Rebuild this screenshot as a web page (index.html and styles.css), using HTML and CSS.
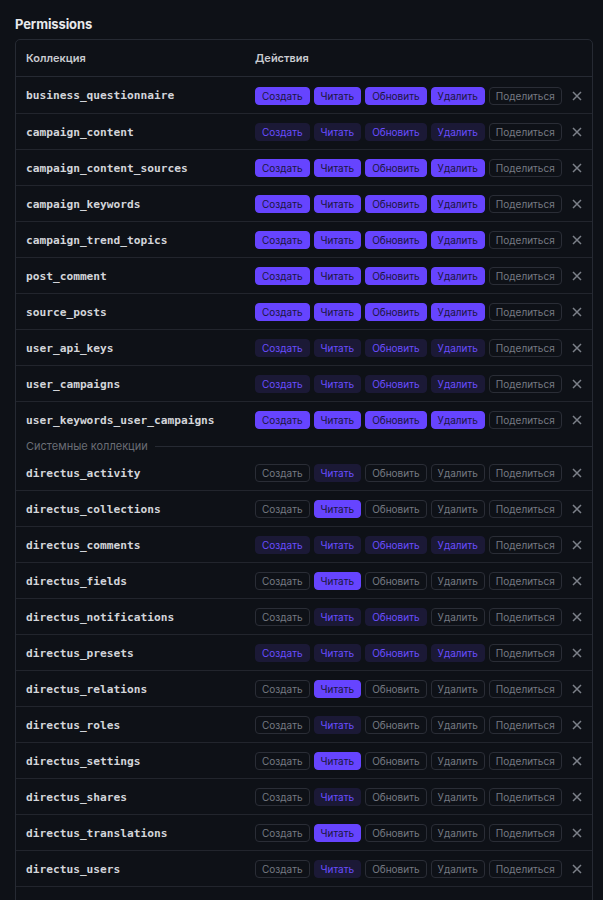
FILE: index.html
```html
<!DOCTYPE html>
<html lang="ru">
<head>
<meta charset="utf-8">
<title>Permissions</title>
<link rel="stylesheet" href="styles.css">
</head>
<body>
<h2 class="title">Permissions</h2>
<div class="table">
  <div class="head">
    <div class="col-name">Коллекция</div>
    <div class="col-act">Действия</div>
  </div>

  <div class="row first"><div class="name">business_questionnaire</div><div class="acts"><span class="b full">Создать</span><span class="b full">Читать</span><span class="b full">Обновить</span><span class="b full">Удалить</span><span class="b">Поделиться</span><svg class="x" viewBox="0 0 10 10"><path d="M1 1L9 9M9 1L1 9"/></svg></div></div>
  <div class="row"><div class="name">campaign_content</div><div class="acts"><span class="b part">Создать</span><span class="b part">Читать</span><span class="b part">Обновить</span><span class="b part">Удалить</span><span class="b">Поделиться</span><svg class="x" viewBox="0 0 10 10"><path d="M1 1L9 9M9 1L1 9"/></svg></div></div>
  <div class="row"><div class="name">campaign_content_sources</div><div class="acts"><span class="b full">Создать</span><span class="b full">Читать</span><span class="b full">Обновить</span><span class="b full">Удалить</span><span class="b">Поделиться</span><svg class="x" viewBox="0 0 10 10"><path d="M1 1L9 9M9 1L1 9"/></svg></div></div>
  <div class="row"><div class="name">campaign_keywords</div><div class="acts"><span class="b full">Создать</span><span class="b full">Читать</span><span class="b full">Обновить</span><span class="b full">Удалить</span><span class="b">Поделиться</span><svg class="x" viewBox="0 0 10 10"><path d="M1 1L9 9M9 1L1 9"/></svg></div></div>
  <div class="row"><div class="name">campaign_trend_topics</div><div class="acts"><span class="b full">Создать</span><span class="b full">Читать</span><span class="b full">Обновить</span><span class="b full">Удалить</span><span class="b">Поделиться</span><svg class="x" viewBox="0 0 10 10"><path d="M1 1L9 9M9 1L1 9"/></svg></div></div>
  <div class="row"><div class="name">post_comment</div><div class="acts"><span class="b full">Создать</span><span class="b full">Читать</span><span class="b full">Обновить</span><span class="b full">Удалить</span><span class="b">Поделиться</span><svg class="x" viewBox="0 0 10 10"><path d="M1 1L9 9M9 1L1 9"/></svg></div></div>
  <div class="row"><div class="name">source_posts</div><div class="acts"><span class="b full">Создать</span><span class="b full">Читать</span><span class="b full">Обновить</span><span class="b full">Удалить</span><span class="b">Поделиться</span><svg class="x" viewBox="0 0 10 10"><path d="M1 1L9 9M9 1L1 9"/></svg></div></div>
  <div class="row"><div class="name">user_api_keys</div><div class="acts"><span class="b part">Создать</span><span class="b part">Читать</span><span class="b part">Обновить</span><span class="b part">Удалить</span><span class="b">Поделиться</span><svg class="x" viewBox="0 0 10 10"><path d="M1 1L9 9M9 1L1 9"/></svg></div></div>
  <div class="row"><div class="name">user_campaigns</div><div class="acts"><span class="b part">Создать</span><span class="b part">Читать</span><span class="b part">Обновить</span><span class="b part">Удалить</span><span class="b">Поделиться</span><svg class="x" viewBox="0 0 10 10"><path d="M1 1L9 9M9 1L1 9"/></svg></div></div>
  <div class="row last"><div class="name">user_keywords_user_campaigns</div><div class="acts"><span class="b full">Создать</span><span class="b full">Читать</span><span class="b full">Обновить</span><span class="b full">Удалить</span><span class="b">Поделиться</span><svg class="x" viewBox="0 0 10 10"><path d="M1 1L9 9M9 1L1 9"/></svg></div></div>

  <div class="divider"><span>Системные коллекции</span><i></i></div>

  <div class="row"><div class="name">directus_activity</div><div class="acts"><span class="b">Создать</span><span class="b part">Читать</span><span class="b">Обновить</span><span class="b">Удалить</span><span class="b">Поделиться</span><svg class="x" viewBox="0 0 10 10"><path d="M1 1L9 9M9 1L1 9"/></svg></div></div>
  <div class="row"><div class="name">directus_collections</div><div class="acts"><span class="b">Создать</span><span class="b full">Читать</span><span class="b">Обновить</span><span class="b">Удалить</span><span class="b">Поделиться</span><svg class="x" viewBox="0 0 10 10"><path d="M1 1L9 9M9 1L1 9"/></svg></div></div>
  <div class="row"><div class="name">directus_comments</div><div class="acts"><span class="b part">Создать</span><span class="b part">Читать</span><span class="b part">Обновить</span><span class="b part">Удалить</span><span class="b">Поделиться</span><svg class="x" viewBox="0 0 10 10"><path d="M1 1L9 9M9 1L1 9"/></svg></div></div>
  <div class="row"><div class="name">directus_fields</div><div class="acts"><span class="b">Создать</span><span class="b full">Читать</span><span class="b">Обновить</span><span class="b">Удалить</span><span class="b">Поделиться</span><svg class="x" viewBox="0 0 10 10"><path d="M1 1L9 9M9 1L1 9"/></svg></div></div>
  <div class="row"><div class="name">directus_notifications</div><div class="acts"><span class="b">Создать</span><span class="b part">Читать</span><span class="b part">Обновить</span><span class="b">Удалить</span><span class="b">Поделиться</span><svg class="x" viewBox="0 0 10 10"><path d="M1 1L9 9M9 1L1 9"/></svg></div></div>
  <div class="row"><div class="name">directus_presets</div><div class="acts"><span class="b part">Создать</span><span class="b part">Читать</span><span class="b part">Обновить</span><span class="b part">Удалить</span><span class="b">Поделиться</span><svg class="x" viewBox="0 0 10 10"><path d="M1 1L9 9M9 1L1 9"/></svg></div></div>
  <div class="row"><div class="name">directus_relations</div><div class="acts"><span class="b">Создать</span><span class="b full">Читать</span><span class="b">Обновить</span><span class="b">Удалить</span><span class="b">Поделиться</span><svg class="x" viewBox="0 0 10 10"><path d="M1 1L9 9M9 1L1 9"/></svg></div></div>
  <div class="row"><div class="name">directus_roles</div><div class="acts"><span class="b">Создать</span><span class="b part">Читать</span><span class="b">Обновить</span><span class="b">Удалить</span><span class="b">Поделиться</span><svg class="x" viewBox="0 0 10 10"><path d="M1 1L9 9M9 1L1 9"/></svg></div></div>
  <div class="row"><div class="name">directus_settings</div><div class="acts"><span class="b">Создать</span><span class="b full">Читать</span><span class="b">Обновить</span><span class="b">Удалить</span><span class="b">Поделиться</span><svg class="x" viewBox="0 0 10 10"><path d="M1 1L9 9M9 1L1 9"/></svg></div></div>
  <div class="row"><div class="name">directus_shares</div><div class="acts"><span class="b">Создать</span><span class="b part">Читать</span><span class="b">Обновить</span><span class="b">Удалить</span><span class="b">Поделиться</span><svg class="x" viewBox="0 0 10 10"><path d="M1 1L9 9M9 1L1 9"/></svg></div></div>
  <div class="row"><div class="name">directus_translations</div><div class="acts"><span class="b">Создать</span><span class="b full">Читать</span><span class="b">Обновить</span><span class="b">Удалить</span><span class="b">Поделиться</span><svg class="x" viewBox="0 0 10 10"><path d="M1 1L9 9M9 1L1 9"/></svg></div></div>
  <div class="row"><div class="name">directus_users</div><div class="acts"><span class="b">Создать</span><span class="b part">Читать</span><span class="b">Обновить</span><span class="b">Удалить</span><span class="b">Поделиться</span><svg class="x" viewBox="0 0 10 10"><path d="M1 1L9 9M9 1L1 9"/></svg></div></div>
  <div class="row empty"></div>
</div>
</body>
</html>
```

FILE: styles.css
```css
* { box-sizing: border-box; }
html, body {
  margin: 0;
  background: #0e1117;
}
body {
  padding: 16px 10px 0 15px;
  font-family: Inter, "Noto Sans", sans-serif;
  color: #d5d7dc;
}
.title {
  margin: 0 0 7px 0;
  font-size: 13px;
  font-weight: 700;
  line-height: 16px;
  color: #e8e9ec;
  letter-spacing: -0.1px;
}
.table {
  border: 1px solid #262a33;
  border-radius: 5px;
  width: 578px;
}
.head {
  display: flex;
  align-items: center;
  height: 37px;
  padding-left: 10px;
  border-bottom: 1px solid #262a33;
  font-size: 11px;
  font-weight: 600;
  color: #c9cbd0;
}
.col-name { width: 229px; flex-shrink: 0; }
.row {
  display: flex;
  align-items: center;
  height: 36px;
  padding-left: 10px;
  padding-top: 1px;
  border-bottom: 1px solid #22252d;
}
.row.first { height: 37px; padding-top: 1px; }
.row.last { border-bottom: none; height: 35px; padding-top: 1px; }
.row.empty { height: 20px; border-bottom: none; }
.name {
  width: 229px;
  flex-shrink: 0;
  font-family: "DejaVu Sans Mono", "Liberation Mono", monospace;
  font-weight: 700;
  font-size: 11.2px;
  color: #d3d5da;
}
.acts {
  display: flex;
  align-items: center;
  gap: 4px;
}
.b {
  display: inline-flex;
  align-items: center;
  justify-content: center;
  height: 18px;
  padding: 0 6px;
  border-radius: 4px;
  border: 1px solid #2a2d36;
  font-size: 10px;
  line-height: 1;
  color: #767a83;
}
.b.full {
  background: #6644ff;
  border-color: #6644ff;
  color: #1b1640;
}
.b.part {
  background: #1b1936;
  border-color: #1b1936;
  color: #6a4dff;
}
.x {
  width: 10px;
  height: 10px;
  margin-left: 6px;
  fill: none;
  stroke: #7c8089;
  stroke-width: 1.5;
}
.divider {
  display: flex;
  align-items: center;
  height: 18px;
  padding-left: 10px;
  font-size: 11px;
  color: #6a6d75;
}
.divider i {
  flex: 1;
  height: 1px;
  margin-left: 7px;
  background: #262a33;
}
```
